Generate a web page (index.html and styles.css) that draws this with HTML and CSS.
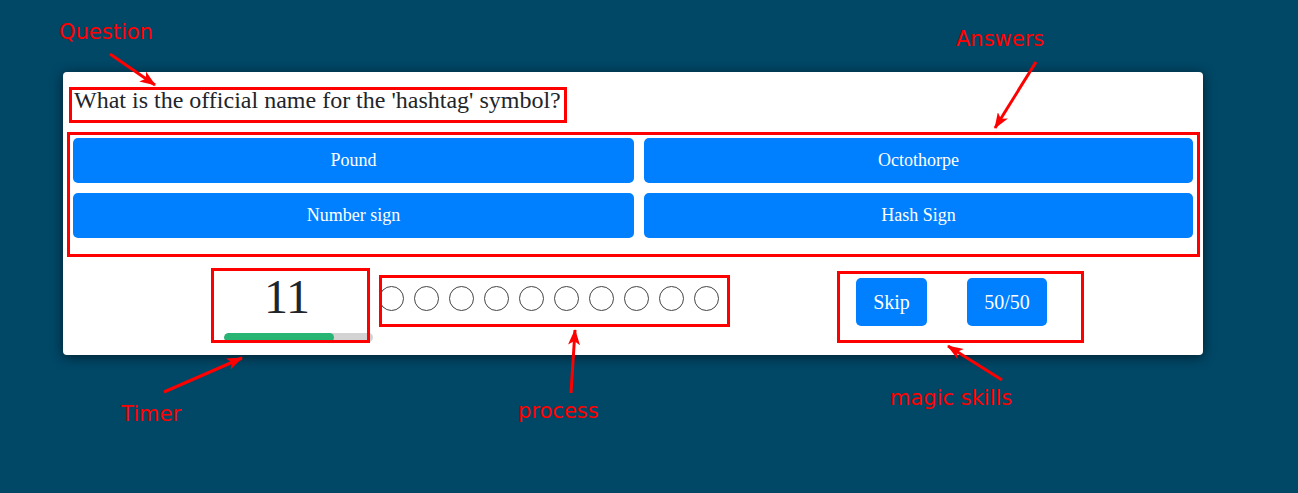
FILE: index.html
```html
<!DOCTYPE html>
<html lang="en">
<head>
<meta charset="utf-8">
<title>Quiz</title>
<link rel="stylesheet" href="styles.css">
</head>
<body>
<div class="stage">
  <div class="card">
    <div class="question">What is the official name for the 'hashtag' symbol?</div>
    <div class="answers">
      <button class="answer">Pound</button>
      <button class="answer">Octothorpe</button>
      <button class="answer">Number sign</button>
      <button class="answer">Hash Sign</button>
    </div>
    <div class="status">
      <div class="timer">
        <div class="count">11</div>
        <div class="bar"><div class="bar-fill" style="width:74%"></div></div>
      </div>
      <div class="progress">
        <span class="dot"></span><span class="dot"></span><span class="dot"></span><span class="dot"></span><span class="dot"></span>
        <span class="dot"></span><span class="dot"></span><span class="dot"></span><span class="dot"></span><span class="dot"></span>
      </div>
      <div class="skills">
        <button class="skill skip">Skip</button>
        <button class="skill half">50/50</button>
      </div>
    </div>
  </div>
</div>

<svg class="notes" width="1298" height="493" viewBox="0 0 1298 493" xmlns="http://www.w3.org/2000/svg">
  <defs>
    <marker id="head" markerWidth="16" markerHeight="12" refX="15" refY="6" orient="auto" markerUnits="userSpaceOnUse">
      <path d="M0,0 L16,6 L0,12 L4,6 z" fill="#ff0000"/>
    </marker>
  </defs>
  <g class="boxes" fill="none" stroke="#ff0000" stroke-width="3">
    <rect x="70.5" y="88.5" width="495" height="33"/>
    <rect x="68.5" y="133.5" width="1130" height="122"/>
    <rect x="212.5" y="269.5" width="156" height="72"/>
    <rect x="380.5" y="276.5" width="348" height="49"/>
    <rect x="838.5" y="272.5" width="244" height="69"/>
  </g>
  <g class="arrows" stroke="#ff0000" stroke-width="3" marker-end="url(#head)">
    <line x1="110" y1="54" x2="155" y2="85"/>
    <line x1="1036" y1="62" x2="995" y2="128"/>
    <line x1="164" y1="392" x2="242" y2="358"/>
    <line x1="571" y1="393" x2="575" y2="330"/>
    <line x1="1002" y1="380" x2="948" y2="346"/>
  </g>
  <g class="labels">
    <text x="59" y="39">Question</text>
    <text x="956" y="46">Answers</text>
    <text x="121" y="421">Timer</text>
    <text x="518" y="418">process</text>
    <text x="890" y="405">magic skills</text>
  </g>
</svg>
</body>
</html>
```

FILE: styles.css
```css
html, body {
  margin: 0;
  padding: 0;
}

body {
  background: #014766;
  width: 1298px;
  height: 493px;
  position: relative;
  overflow: hidden;
  font-family: "Liberation Serif", "Times New Roman", serif;
  color: #212529;
}

.stage {
  padding: 72px 0 0 63px;
}

.card {
  box-sizing: border-box;
  width: 1140px;
  background: #ffffff;
  border-radius: 4px;
  padding: 10px 10px 13px;
  box-shadow: 0 2px 12px rgba(0, 0, 0, 0.55);
}

.question {
  margin: 2px 0 0 1px;
  font-size: 24px;
  line-height: 32px;
}

.answers {
  margin-top: 22px;
  display: grid;
  grid-template-columns: 561px 549px;
  grid-auto-rows: 45px;
  gap: 10px;
}

button {
  font-family: "Liberation Serif", "Times New Roman", serif;
  border: none;
  background: #0080ff;
  color: #ffffff;
  border-radius: 5px;
  padding: 0;
  display: flex;
  align-items: center;
  justify-content: center;
  cursor: pointer;
}

.answer {
  font-size: 18px;
}

.status {
  margin-top: 35px;
  display: flex;
  align-items: flex-start;
}

.timer {
  margin-left: 151px;
  width: 149px;
}

.count {
  font-size: 48px;
  line-height: 48px;
  text-align: center;
  padding-right: 23px;
}

.bar {
  margin-top: 12px;
  height: 9px;
  background: #d3d3d3;
  border-radius: 5px;
  overflow: hidden;
}

.bar-fill {
  height: 100%;
  background: #28b473;
  border-radius: 5px;
}

.progress {
  margin: 13px 0 0 6px;
  display: flex;
  gap: 10px;
}

.dot {
  box-sizing: border-box;
  width: 25px;
  height: 25px;
  border: 1px solid #444444;
  border-radius: 50%;
}

.skills {
  margin: 5px 0 0 137px;
  display: flex;
  gap: 40px;
}

.skill {
  height: 48px;
  font-size: 20px;
}

.skip {
  width: 71px;
}

.half {
  width: 80px;
}

.notes {
  position: absolute;
  top: 0;
  left: 0;
  pointer-events: none;
}

.labels text {
  font-family: "DejaVu Sans", sans-serif;
  font-size: 21px;
  fill: #ff0000;
}
```
